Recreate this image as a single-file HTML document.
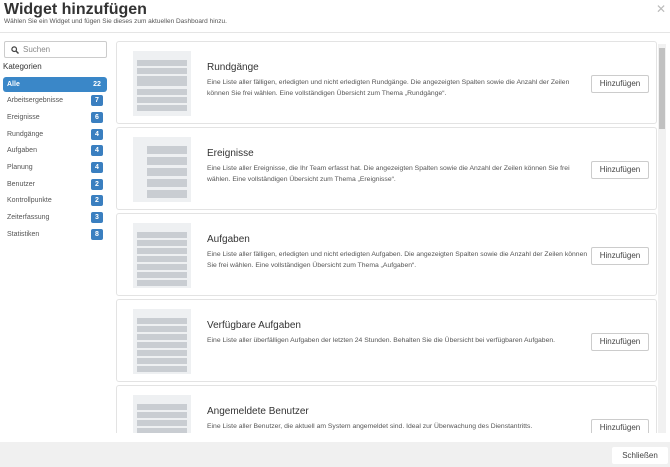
<!DOCTYPE html>
<html><head><meta charset="utf-8"><style>
*{box-sizing:border-box;margin:0;padding:0}
body{width:670px;height:467px;overflow:hidden;background:#fff;font-family:"Liberation Sans",sans-serif;color:#333;position:relative}
.t{position:absolute;left:4px;top:1px;font-size:16px;line-height:17px;font-weight:bold;color:#333}
.st{position:absolute;left:4px;top:18px;font-size:6.5px;line-height:8px;color:#555}
.x{position:absolute;left:656px;top:2px;font-size:12px;color:#bbb}
.hr{position:absolute;left:0;top:32px;width:670px;border-top:1px solid #e5e5e5}
.search{position:absolute;left:4px;top:41px;width:103px;height:17px;border:1px solid #ccc;border-radius:2px;font-size:8px;color:#888;padding:3px 0 0 18px}
.kat{position:absolute;left:3px;top:62px;font-size:8px;color:#333}
.cat{position:absolute;left:3px;width:104px;height:15px;font-size:7px;color:#555;padding:4px 0 0 4px}
.cat b{position:absolute;right:4px;top:2px;width:12px;height:11px;background:#3a7fc0;color:#fff;border-radius:2px;font-size:7px;text-align:center;line-height:11px}
.cat.a{background:#3a87c8;color:#fff;border-radius:3px;font-weight:bold}
.cat.a b{background:none}
.card{position:absolute;left:116px;width:541px;height:83px;border:1px solid #e3e3e3;border-radius:3px;background:#fff}
.thumb{position:absolute;left:16px;top:9px;width:58px;height:65px;background:#eef0f2}
.thumb i{position:absolute;left:4px;width:50px;height:6px;background:#c9cdd2}
.card h3{position:absolute;left:90px;top:20px;font-size:10px;font-weight:normal;color:#333}
.card p{position:absolute;left:90px;top:35px;width:385px;font-size:6.8px;line-height:11px;color:#555}
.btn{position:absolute;left:474px;top:33px;width:58px;height:18px;border:1px solid #ccc;border-radius:2px;font-size:8px;text-align:center;line-height:16px;color:#444}
.sb{position:absolute;left:658px;top:44px;width:8px;height:389px;background:#f1f1f1}
.sb i{position:absolute;left:1px;top:4px;width:6px;height:81px;background:#c1c1c1}
.clip{position:absolute;left:0;top:0;width:670px;height:433px;overflow:hidden}
.foot{position:absolute;left:0;top:442px;width:670px;height:25px;background:#f0f0f0}
.close{position:absolute;left:612px;top:447px;width:56px;height:17px;background:#fff;font-size:8px;text-align:center;line-height:17px;color:#444;border-radius:2px}
</style></head><body>
<div class="t">Widget hinzufügen</div>
<div class="st">Wählen Sie ein Widget und fügen Sie dieses zum aktuellen Dashboard hinzu.</div>
<div class="x">✕</div>
<div class="hr"></div>
<div class="search"><svg style="position:absolute;left:6px;top:4px" width="8" height="8" viewBox="0 0 8 8"><circle cx="3.2" cy="3.2" r="2.3" fill="none" stroke="#444" stroke-width="1.2"/><path d="M5 5L7.5 7.5" stroke="#444" stroke-width="1.4"/></svg>Suchen</div>
<div class="kat">Kategorien</div>
<div class="cat a" style="top:77px">Alle<b>22</b></div>
<div class="cat" style="top:93px">Arbeitsergebnisse<b>7</b></div>
<div class="cat" style="top:110px">Ereignisse<b>6</b></div>
<div class="cat" style="top:127px">Rundgänge<b>4</b></div>
<div class="cat" style="top:143px">Aufgaben<b>4</b></div>
<div class="cat" style="top:160px">Planung<b>4</b></div>
<div class="cat" style="top:177px">Benutzer<b>2</b></div>
<div class="cat" style="top:193px">Kontrollpunkte<b>2</b></div>
<div class="cat" style="top:210px">Zeiterfassung<b>3</b></div>
<div class="cat" style="top:227px">Statistiken<b>8</b></div>
<div class="clip">
<div class="card" style="top:41px"><div class="thumb"><i style="top:9px"></i><i style="top:17px"></i><i style="top:25px;height:10px"></i><i style="top:38px"></i><i style="top:46px"></i><i style="top:54px"></i></div><h3>Rundgänge</h3><p>Eine Liste aller fälligen, erledigten und nicht erledigten Rundgänge. Die angezeigten Spalten sowie die Anzahl der Zeilen können Sie frei wählen. Eine vollständigen Übersicht zum Thema „Rundgänge“.</p><div class="btn">Hinzufügen</div></div>
<div class="card" style="top:127px"><div class="thumb"><i style="top:9px;left:14px;width:40px;height:8px"></i><i style="top:20px;left:14px;width:40px;height:8px"></i><i style="top:31px;left:14px;width:40px;height:8px"></i><i style="top:42px;left:14px;width:40px;height:8px"></i><i style="top:53px;left:14px;width:40px;height:8px"></i></div><h3>Ereignisse</h3><p>Eine Liste aller Ereignisse, die Ihr Team erfasst hat. Die angezeigten Spalten sowie die Anzahl der Zeilen können Sie frei wählen. Eine vollständigen Übersicht zum Thema „Ereignisse“.</p><div class="btn">Hinzufügen</div></div>
<div class="card" style="top:213px"><div class="thumb"><i style="top:9px"></i><i style="top:17px"></i><i style="top:25px"></i><i style="top:33px"></i><i style="top:41px"></i><i style="top:49px"></i><i style="top:57px"></i></div><h3>Aufgaben</h3><p>Eine Liste aller fälligen, erledigten und nicht erledigten Aufgaben. Die angezeigten Spalten sowie die Anzahl der Zeilen können Sie frei wählen. Eine vollständigen Übersicht zum Thema „Aufgaben“.</p><div class="btn">Hinzufügen</div></div>
<div class="card" style="top:299px"><div class="thumb"><i style="top:9px"></i><i style="top:17px"></i><i style="top:25px"></i><i style="top:33px"></i><i style="top:41px"></i><i style="top:49px"></i><i style="top:57px"></i></div><h3>Verfügbare Aufgaben</h3><p>Eine Liste aller überfälligen Aufgaben der letzten 24 Stunden. Behalten Sie die Übersicht bei verfügbaren Aufgaben.</p><div class="btn">Hinzufügen</div></div>
<div class="card" style="top:385px"><div class="thumb"><i style="top:9px"></i><i style="top:17px"></i><i style="top:25px"></i><i style="top:33px"></i><i style="top:41px"></i></div><h3>Angemeldete Benutzer</h3><p>Eine Liste aller Benutzer, die aktuell am System angemeldet sind. Ideal zur Überwachung des Dienstantritts.</p><div class="btn">Hinzufügen</div></div>
</div>
<div class="sb"><i></i></div>
<div class="foot"></div>
<div class="close">Schließen</div>
</body></html>
